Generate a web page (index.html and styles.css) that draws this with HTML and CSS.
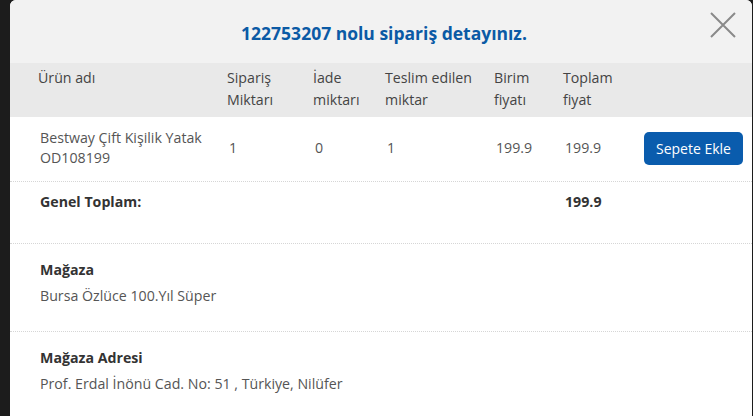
FILE: index.html
```html
<!DOCTYPE html>
<html lang="tr">
<head>
    <meta charset="UTF-8">
    <meta name="viewport" content="width=device-width, initial-scale=1.0">
    <title>Sipariş detayı</title>
    <link rel="stylesheet" href="styles.css">
</head>
<body>
    <div id="modal">
        <div id="modal-head">
            <h2 class="title">122753207 nolu sipariş detayınız.</h2>
            <span class="close-btn">
                <svg width="26" height="26" viewBox="0 0 26 26">
                    <path d="M1 1 L25 25 M25 1 L1 25" stroke="#8a8a8a" stroke-width="2" fill="none"/>
                </svg>
            </span>
        </div>

        <div class="grid-row head-row">
            <div>Ürün adı</div>
            <div>Sipariş<br>Miktarı</div>
            <div>İade<br>miktarı</div>
            <div>Teslim edilen<br>miktar</div>
            <div>Birim<br>fiyatı</div>
            <div>Toplam<br>fiyat</div>
            <div></div>
        </div>

        <div class="grid-row item-row">
            <div>Bestway Çift Kişilik Yatak<br>OD108199</div>
            <div>1</div>
            <div>0</div>
            <div>1</div>
            <div>199.9</div>
            <div>199.9</div>
            <div><button class="cart-btn">Sepete Ekle</button></div>
        </div>

        <div class="grid-row total-row">
            <div>Genel Toplam:</div>
            <div></div>
            <div></div>
            <div></div>
            <div></div>
            <div>199.9</div>
            <div></div>
        </div>

        <div class="info-block">
            <div class="info-label">Mağaza</div>
            <div class="info-text">Bursa Özlüce 100.Yıl Süper</div>
        </div>

        <div class="info-block last">
            <div class="info-label">Mağaza Adresi</div>
            <div class="info-text">Prof. Erdal İnönü Cad. No: 51 , Türkiye, Nilüfer</div>
        </div>
    </div>
</body>
</html>
```

FILE: styles.css
```css
body {
    margin: 0;
    padding: 0 1px 0 10px;
    height: 100vh;
    overflow: hidden;
    background-color: #1c1c1c;
    font-family: "Open Sans", "Noto Sans", sans-serif;
    font-size: 14.2px;
    color: #555;
}

#modal {
    width: 742px;
    min-height: 100vh;
    background-color: #fff;
    border-radius: 6px 6px 0 0;
    overflow: hidden;
}

#modal-head {
    height: 63px;
    background-color: #f2f2f2;
    display: flex;
    align-items: center;
    justify-content: center;
    position: relative;
}

.title {
    margin: 0;
    padding: 2px 0 0 6px;
    font-size: 17.5px;
    font-weight: 700;
    color: #0b5aa5;
}

.close-btn {
    position: absolute;
    top: 12px;
    right: 16px;
    display: flex;
}

.grid-row {
    display: grid;
    grid-template-columns: 189px 86px 72px 109px 69px 79px 1fr;
    padding-left: 28px;
}

.head-row {
    background-color: #e9e9e9;
    color: #444;
    line-height: 22px;
    padding-top: 4px;
    padding-bottom: 6px;
}

.item-row {
    align-items: center;
    line-height: 20px;
    padding-top: 11px;
    padding-bottom: 13px;
    border-bottom: 1px dotted #d6d6d6;
}

.item-row > div,
.total-row > div {
    padding-left: 2px;
}

.cart-btn {
    width: 99px;
    height: 33px;
    border: none;
    border-radius: 5px;
    background-color: #0a5cad;
    color: #fff;
    font-family: inherit;
    font-size: 14px;
    cursor: pointer;
}

.total-row {
    line-height: 20px;
    padding-top: 10px;
    padding-bottom: 31px;
    font-weight: 700;
    color: #333;
    border-bottom: 1px dotted #d6d6d6;
}

.info-block {
    padding: 16px 30px 25px;
    border-bottom: 1px dotted #d6d6d6;
}

.info-block.last {
    border-bottom: none;
}

.info-label {
    font-weight: 700;
    color: #333;
    line-height: 20px;
    margin-bottom: 6px;
}

.info-text {
    line-height: 20px;
}
```
